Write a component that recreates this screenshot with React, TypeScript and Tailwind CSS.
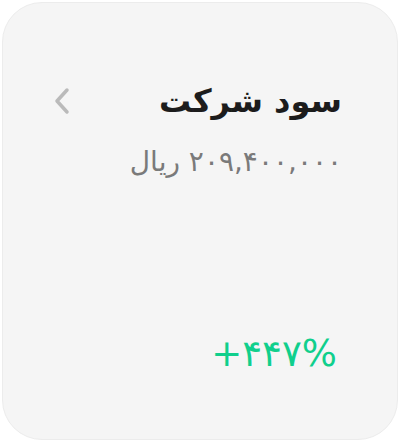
const stat = {
  title: "سود شرکت",
  amount: "۲۰۹,۴۰۰,۰۰۰ ریال",
  change: "+۴۴۷%",
};

const Chevron = () => (
  <svg width="20" height="28" viewBox="0 0 20 28" fill="none" className="shrink-0">
    <polyline
      points="14,3 4,14 14,25"
      stroke="#bababa"
      strokeWidth="3.5"
      strokeLinecap="round"
      strokeLinejoin="round"
    />
  </svg>
);

const ProfitCard = () => {
  return (
    <div
      dir="rtl"
      className="m-[2px] h-[438px] w-[396px] rounded-[40px] border border-[#ececec] bg-[#f5f5f5] pr-[55px] pl-[50px] pt-[74px] flex flex-col"
      style={{ fontFamily: '"DejaVu Sans", "Noto Sans", sans-serif' }}
    >
      <div className="flex items-center justify-between">
        <h2 className="m-0 text-[32px] font-bold leading-[48px] text-[#1c1c1c]">{stat.title}</h2>
        <Chevron />
      </div>
      <p className="mt-[18px] text-[28px] leading-[38px] text-[#7a7a7a]">{stat.amount}</p>
      <div className="mt-auto mb-[63px] flex pr-[5px]">
        <span className="text-[37px] leading-[44px] text-[#10cf8c]" dir="ltr">
          {stat.change}
        </span>
      </div>
    </div>
  );
};

export default function App() {
  return (
    <div className="h-[442px] w-[400px] bg-white">
      <ProfitCard />
    </div>
  );
}
